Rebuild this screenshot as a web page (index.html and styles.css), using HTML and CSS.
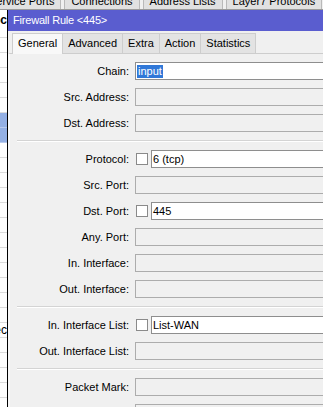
FILE: index.html
```html
<!DOCTYPE html>
<html lang="en">
<head>
    <meta charset="UTF-8">
    <meta name="viewport" content="width=device-width, initial-scale=1.0">
    <title>Firewall Rule &lt;445&gt;</title>
    <link rel="stylesheet" href="styles.css">
</head>
<body>
    <div class="bgtabs">
        <span class="bgtab first">Service Ports</span>
        <span class="bgtab">Connections</span>
        <span class="bgtab">Address Lists</span>
        <span class="bgtab">Layer7 Protocols</span>
    </div>
    <div class="desk">
        <div class="bglist">
            <div class="bgrow top"><b>Protoc</b></div>
            <div class="bgrow"></div>
            <div class="bgrow"></div>
            <div class="bgrow"></div>
            <div class="bgrow"></div>
            <div class="bgrow"></div>
            <div class="bgrow"></div>
            <div class="bgrow picked"></div>
            <div class="bgrow picked"></div>
            <div class="bgrow"></div>
            <div class="bgrow"></div>
            <div class="bgrow"></div>
            <div class="bgrow"></div>
            <div class="bgrow"></div>
            <div class="bgrow"></div>
            <div class="bgrow"></div>
            <div class="bgrow"></div>
            <div class="bgrow"></div>
            <div class="bgrow"></div>
            <div class="bgrow"></div>
            <div class="bgrow"></div>
            <div class="bgrow"><span>Selec</span></div>
            <div class="bgrow"></div>
            <div class="bgrow"></div>
            <div class="bgrow"></div>
            <div class="bgrow"></div>
        </div>

        <div class="win">
            <div class="titlebar">Firewall Rule &lt;445&gt;</div>
            <div class="tabs">
                <span class="tab active">General</span>
                <span class="tab">Advanced</span>
                <span class="tab">Extra</span>
                <span class="tab">Action</span>
                <span class="tab">Statistics</span>
            </div>
            <div class="panel">
                <div class="group">
                    <div class="row"><label>Chain:</label><div class="field on"><span class="sel">input</span></div></div>
                    <div class="row"><label>Src. Address:</label><div class="field"></div></div>
                    <div class="row"><label>Dst. Address:</label><div class="field"></div></div>
                </div>
                <div class="sep"></div>
                <div class="group">
                    <div class="row"><label>Protocol:</label><span class="check"></span><div class="field on">6 (tcp)</div></div>
                    <div class="row"><label>Src. Port:</label><div class="field"></div></div>
                    <div class="row"><label>Dst. Port:</label><span class="check"></span><div class="field on">445</div></div>
                    <div class="row"><label>Any. Port:</label><div class="field"></div></div>
                    <div class="row"><label>In. Interface:</label><div class="field"></div></div>
                    <div class="row"><label>Out. Interface:</label><div class="field"></div></div>
                </div>
                <div class="sep"></div>
                <div class="group">
                    <div class="row"><label>In. Interface List:</label><span class="check"></span><div class="field on">List-WAN</div></div>
                    <div class="row"><label>Out. Interface List:</label><div class="field"></div></div>
                </div>
                <div class="sep"></div>
                <div class="group">
                    <div class="row"><label>Packet Mark:</label><div class="field"></div></div>
                    <div class="row"><label>Connection Mark:</label><div class="field"></div></div>
                </div>
            </div>
        </div>
    </div>
</body>
</html>
```

FILE: styles.css
```css
html, body {
    margin: 0;
    overflow: hidden;
}
body {
    font-family: "Liberation Sans", Arial, sans-serif;
    font-size: 11px;
    color: #000;
    background: #fff;
    height: 407px;
}

/* window behind */
.bgtabs {
    display: flex;
    gap: 3px;
    height: 10px;
    box-sizing: border-box;
    border-bottom: 1px solid #9a9a9a;
    background: #f0f0f0;
    overflow: hidden;
}
.bgtab {
    flex: none;
    margin-top: -7px;
    height: 15px;
    line-height: 15px;
    padding: 0 6px;
    background: #e1e1e1;
    border: 1px solid #b9b9b9;
}
.bgtab.first {
    margin-left: -18px;
}
.desk {
    display: flex;
}
.bglist {
    flex: none;
    width: 7px;
    overflow: hidden;
}
.bgrow {
    height: 15px;
    box-sizing: border-box;
    border-bottom: 1px solid #dcdcdc;
    display: flex;
    justify-content: flex-end;
    white-space: nowrap;
    line-height: 14px;
    font-size: 12px;
}
.bgrow b,
.bgrow span {
    flex: none;
}
.bgrow.top {
    height: 13px;
    line-height: 20px;
    border-bottom: none;
}
.bgrow.picked {
    background: #94b0e4;
    border-bottom-color: #b9cbee;
}

/* firewall rule window */
.win {
    flex: none;
    width: 420px;
    border-left: 1px solid #000;
    background: #f0f0f0;
    min-height: 400px;
}
.titlebar {
    height: 21px;
    line-height: 21px;
    padding-left: 5px;
    background: #5a5dcf;
    color: #fff;
    letter-spacing: -0.2px;
}
.tabs {
    display: flex;
    align-items: flex-start;
    height: 22px;
    padding: 2px 0 0 4px;
    box-sizing: border-box;
}
.tab {
    height: 20px;
    line-height: 19px;
    box-sizing: border-box;
    padding: 0 5px;
    border: 1px solid #cdcdcd;
    border-bottom: none;
    margin-right: -1px;
    background: #e3e3e3;
}
.tab.active {
    height: 21px;
    background: #f8f8f8;
    position: relative;
    z-index: 1;
}
.panel {
    border-top: 1px solid #cdcdcd;
    border-left: 2px solid #f9f9f9;
    padding-top: 8px;
    display: flex;
    flex-direction: column;
    gap: 8px;
}
.group {
    display: flex;
    flex-direction: column;
    gap: 8px;
}
.row {
    display: flex;
    align-items: center;
    height: 18px;
}
.row label {
    flex: none;
    width: 119px;
    margin-right: 6px;
    text-align: right;
    white-space: nowrap;
}
.field {
    flex: 1;
    height: 18px;
    box-sizing: border-box;
    border: 1px solid #acacac;
    background: #f0f0f0;
    padding-left: 1px;
    line-height: 16px;
}
.field.on {
    background: #fff;
    border-color: #8e8e8e;
}
.sel {
    display: inline-block;
    vertical-align: top;
    height: 13px;
    line-height: 13px;
    margin-top: 2px;
    padding: 0 1px;
    background: #3078d8;
    color: #fff;
}
.check {
    flex: none;
    width: 12px;
    height: 12px;
    box-sizing: border-box;
    border: 1px solid #8a8a8a;
    background: #fff;
    margin: 0 3px 0 1px;
}
.sep {
    height: 2px;
    box-sizing: border-box;
    margin-left: 7px;
    border-top: 1px solid #d4d4d4;
    border-bottom: 1px solid #fff;
}
```
